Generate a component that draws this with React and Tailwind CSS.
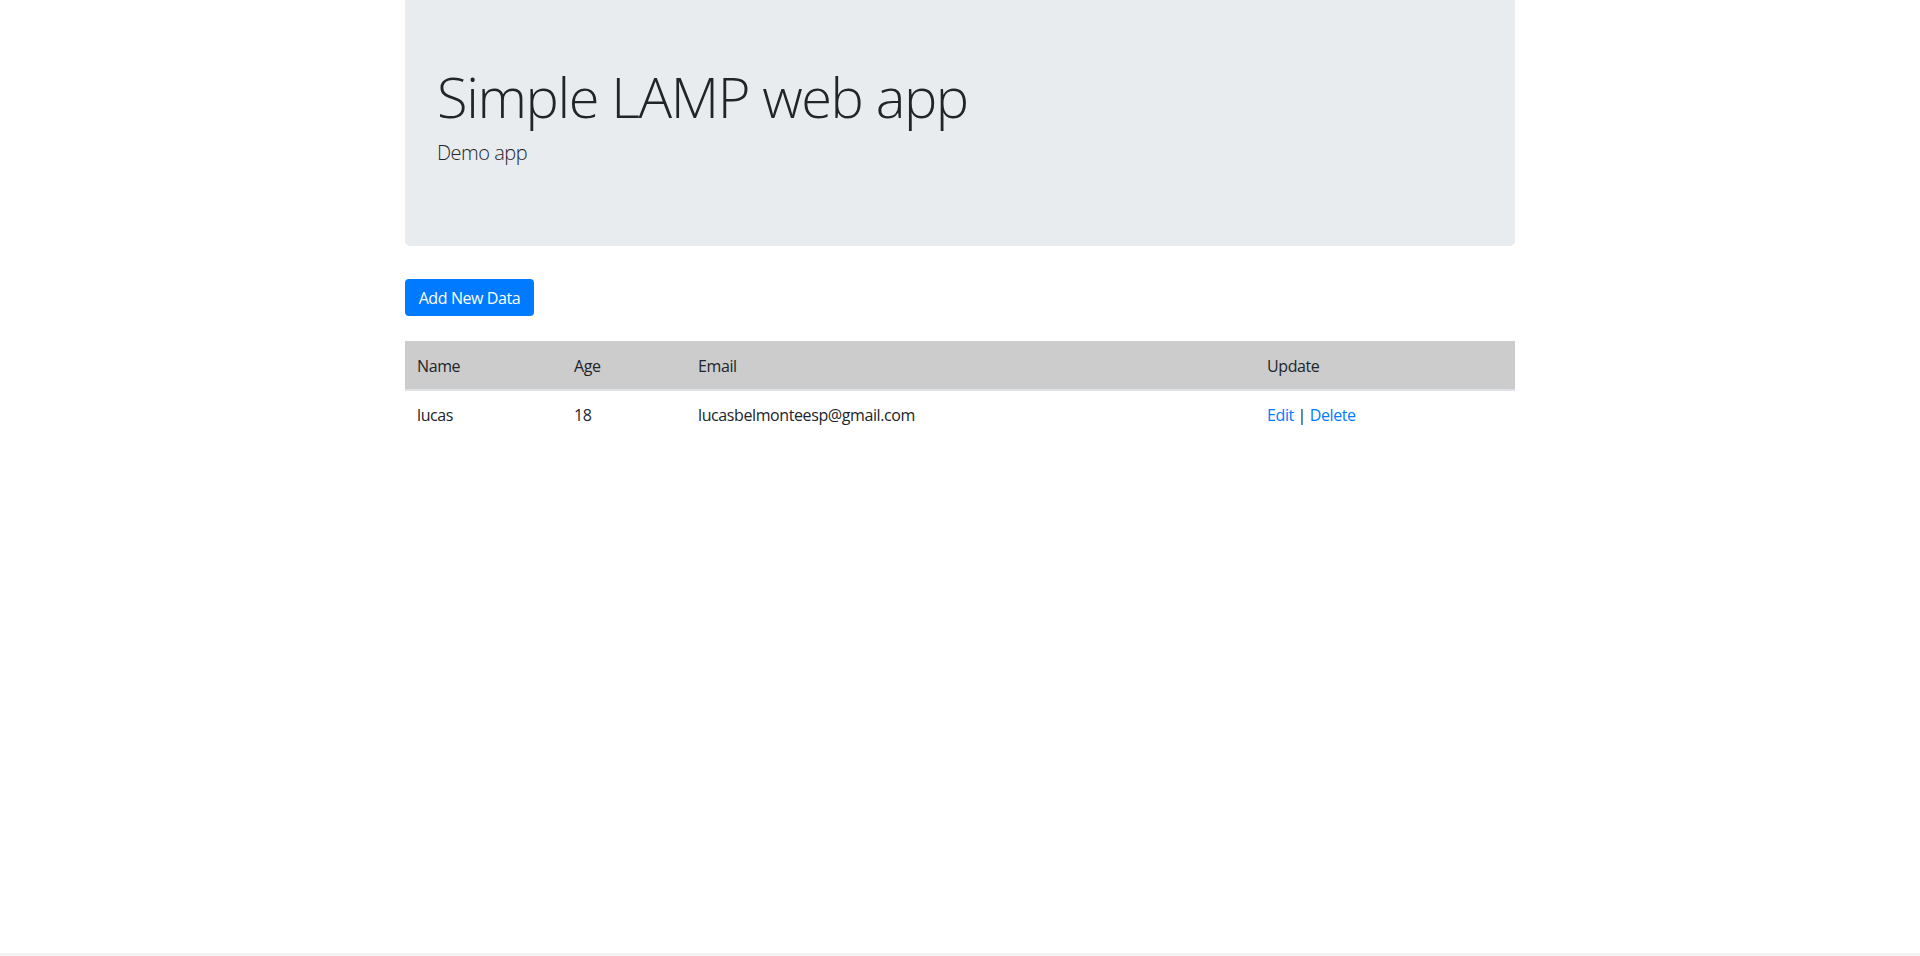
export default function App() {
  const font = { fontFamily: '"Open Sans", "Noto Sans", sans-serif' };
  return (
    <div className="min-h-[956px] flex flex-col bg-white text-[#212529] tracking-[-0.4px]" style={font}>
      <div className="w-[1110px] mx-auto">
        <div className="bg-[#e9ecef] rounded-b-[5px] h-[246px] px-8 pt-[63px]">
          <h1 className="text-[56px] font-light leading-[1.2] mb-2 tracking-[-1.4px]">Simple LAMP web app</h1>
          <p className="text-[20px] font-light leading-[1.5] tracking-[-0.5px]">Demo app</p>
        </div>
        <button className="mt-[33px] h-[37px] w-[129px] bg-[#007bff] text-white text-[16px] rounded-[4px] leading-6">
          Add New Data
        </button>
        <table className="mt-[25px] w-full text-[16px] border-collapse">
          <thead>
            <tr className="bg-[#cccccc]">
              <th className="w-[157px] text-left font-normal px-3 pt-[2px] h-[49px] border-b-2 border-[#dee2e6]">Name</th>
              <th className="w-[124px] text-left font-normal px-3 pt-[2px] border-b-2 border-[#dee2e6]">Age</th>
              <th className="w-[569px] text-left font-normal px-3 pt-[2px] border-b-2 border-[#dee2e6]">Email</th>
              <th className="text-left font-normal px-3 pt-[2px] border-b-2 border-[#dee2e6]">Update</th>
            </tr>
          </thead>
          <tbody>
            <tr>
              <td className="px-3 h-[48px]">lucas</td>
              <td className="px-3">18</td>
              <td className="px-3">lucasbelmonteesp@gmail.com</td>
              <td className="px-3">
                <a className="text-[#007bff]" href="#">Edit</a> | <a className="text-[#007bff]" href="#">Delete</a>
              </td>
            </tr>
          </tbody>
        </table>
      </div>
      <div className="mt-auto h-[3px] bg-[#f3f3f3]" />
    </div>
  );
}
